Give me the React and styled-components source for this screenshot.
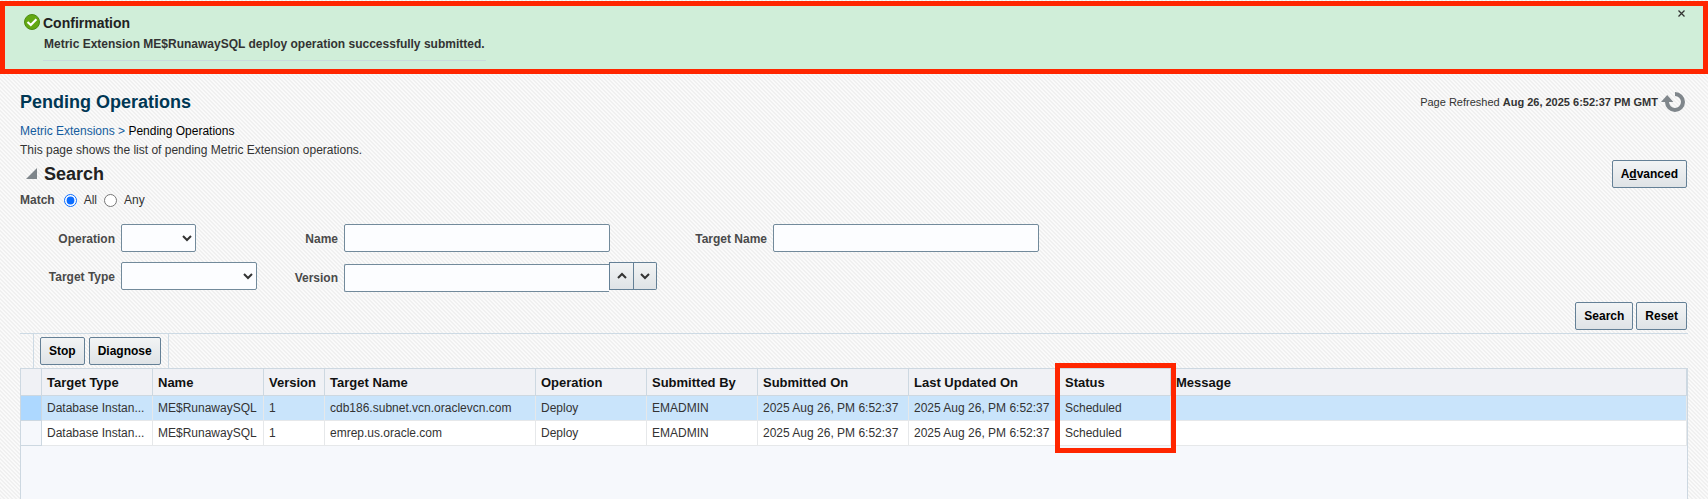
import React from "react";
import styled, { createGlobalStyle } from "styled-components";

const GlobalStyle = createGlobalStyle`
  * { box-sizing: border-box; }
  body {
    margin: 0;
    font-family: "Liberation Sans", Arial, Helvetica, sans-serif;
    font-size: 12px;
    color: #333;
    background-color: #fafafa;
    background-image: linear-gradient(45deg, #f0f0f0 25%, transparent 25%, transparent 50%, #f0f0f0 50%, #f0f0f0 75%, transparent 75%);
    background-size: 4px 4px;
  }
  button, input, select { font-family: inherit; font-size: inherit; }
`;

const Page = styled.div`
  display: flex;
  flex-direction: column;
  min-height: 100vh;
`;

const Banner = styled.section`
  display: flex;
  align-items: flex-start;
  gap: 3px;
  min-height: 73px;
  margin-top: 1px;
  padding: 3px 17px 0 19px;
  background: #d0eed9;
  border: 5px solid #ff2600;
`;

const BannerIcon = styled.svg`
  flex: none;
  margin-top: 5px;
`;

const BannerBody = styled.div`
  padding: 4px 0 5px;
  border-bottom: 1px solid #c8dcdc;
`;

const BannerTitle = styled.h2`
  margin: 0;
  font-size: 14px;
  line-height: 20px;
  color: #222;
`;

const BannerText = styled.p`
  margin: 0;
  padding: 0 1px;
  font-weight: bold;
  line-height: 22px;
`;

const CloseButton = styled.button`
  display: flex;
  margin-left: auto;
  padding: 0;
  border: 0;
  background: none;
  color: #333;
`;

const Content = styled.main`
  display: flex;
  flex: 1;
  flex-direction: column;
  padding: 16px 20px 0;
`;

const SplitRow = styled.div`
  display: flex;
  align-items: center;
  justify-content: space-between;
  padding-right: 1px;
`;

const PageTitle = styled.h1`
  margin: 0;
  font-size: 18px;
  line-height: 24px;
  color: #003754;
`;

const Refreshed = styled.div`
  display: flex;
  align-items: center;
  gap: 3px;
  font-size: 11px;
`;

const RefreshButton = styled.button`
  display: flex;
  padding: 0 2px 0 0;
  border: 0;
  background: none;
`;

const Breadcrumb = styled.nav`
  margin-top: 8px;
  line-height: 19px;
  color: #000;
  a, span { color: #145c9e; }
  a { text-decoration: none; }
`;

const Description = styled.p`
  margin: 0;
  line-height: 19px;
`;

const SectionTitle = styled.h2`
  display: flex;
  align-items: center;
  gap: 7px;
  margin: 0;
  padding-left: 6px;
  font-size: 18px;
  line-height: 24px;
  color: #222;
`;

const Disclosure = styled.button`
  display: flex;
  padding: 0 0 2px;
  border: 0;
  background: none;
`;

const Button = styled.button`
  height: 28px;
  padding: 0 8px;
  border: 1px solid #648096;
  border-radius: 2px;
  background: linear-gradient(#f2f4f5, #dfe3e6);
  color: #000;
  font-weight: bold;
`;

const MatchRow = styled.fieldset`
  display: flex;
  align-items: center;
  height: 20px;
  margin: 5px 0 11px;
  padding: 0;
  border: 0;
`;

const MatchTitle = styled.span`
  margin-right: 9px;
  font-weight: bold;
  color: #4a4a4a;
`;

const RadioLabel = styled.label`
  display: flex;
  align-items: center;
  gap: 7px;
  margin-right: 7px;
`;

const Radio = styled.input`
  width: 13px;
  height: 13px;
  margin: 0;
  accent-color: #0a6cff;
`;

const Fields = styled.div`
  display: flex;
  align-items: flex-start;
`;

const FieldGroup = styled.div`
  display: grid;
  grid-template-columns: ${(p) => p.$label}px auto;
  gap: 10px 6px;
  align-items: center;
`;

const FieldLabel = styled.label`
  padding-top: 2px;
  text-align: right;
  font-weight: bold;
  color: #4a4a4a;
`;

const SelectBox = styled.span`
  display: grid;
  align-items: center;
  width: ${(p) => p.$width}px;
  svg {
    grid-area: 1 / 1;
    justify-self: end;
    margin-right: 4px;
    pointer-events: none;
  }
`;

const SelectInput = styled.select`
  grid-area: 1 / 1;
  width: 100%;
  height: 28px;
  padding: 0 20px 0 4px;
  appearance: none;
  border: 1px solid #728a9b;
  border-radius: 2px;
  background: #fcfdff;
`;

const TextInput = styled.input`
  width: 266px;
  height: 28px;
  padding: 0 4px;
  border: 1px solid #728a9b;
  border-radius: 2px;
  background: #fcfdff;
`;

const SpinField = styled.div`
  display: flex;
  height: 30px;
  ${TextInput} {
    align-self: flex-end;
    width: 265px;
    border-right: 0;
    border-radius: 2px 0 0 2px;
  }
`;

const SpinButton = styled.button`
  display: flex;
  align-items: center;
  justify-content: center;
  width: 25px;
  height: 28px;
  padding: 0;
  border: 1px solid #648096;
  background: linear-gradient(#f2f4f5, #dfe3e6);
  & + & {
    width: 23px;
    border-left: 0;
    border-radius: 0 2px 2px 0;
  }
`;

const Actions = styled.div`
  display: flex;
  justify-content: flex-end;
  gap: 3px;
  padding: 10px 1px 3px;
  border-bottom: 1px solid #cddae4;
`;

const Toolbar = styled.div`
  display: flex;
  align-items: flex-start;
  align-self: flex-start;
  gap: 4px;
  height: 34px;
  margin-left: 13px;
  padding: 3px 7px 0 6px;
  border: solid #cddae4;
  border-width: 0 1px;
`;

const TablePanel = styled.div`
  flex: 1;
  border: 1px solid #cdd8e1;
  border-bottom: 0;
  background: #f6f8fc;
`;

const Table = styled.table`
  width: 100%;
  table-layout: fixed;
  border-spacing: 0;
`;

const HeadCell = styled.th`
  position: relative;
  height: 27px;
  padding: 1px 5px 0;
  border: solid #cdd8e1;
  border-width: 0 1px 1px 0;
  background: #f0f1f5;
  color: #111;
  font-size: 13px;
  text-align: left;
  white-space: nowrap;
`;

const Highlight = styled.span`
  position: absolute;
  z-index: 1;
  top: -6px;
  left: -5px;
  right: -6px;
  height: 90px;
  border: 5px solid #ff2600;
  pointer-events: none;
`;

const Row = styled.tr`
  background: ${(p) => (p.$selected ? "#c9e4fb" : "#fff")};
`;

const Cell = styled.td`
  height: 25px;
  padding: 0 5px;
  border: solid #e6e8ea;
  border-width: 0 1px 1px 0;
  white-space: nowrap;
`;

const Gutter = styled.td`
  padding: 0;
  border: solid #cdd8e1;
  border-width: 0 1px 1px 0;
  background: ${(p) => (p.$selected ? "#add8ff" : "#f6f8fc")};
`;

const Chevron = ({ up }) => (
  <svg width="10" height="8" viewBox="0 0 10 8" fill="none" stroke="#333" strokeWidth="2">
    <path d={up ? "M1 6 L5 2 L9 6" : "M1 2 L5 6 L9 2"} />
  </svg>
);

const Select = ({ id, width }) => (
  <SelectBox $width={width}>
    <SelectInput id={id} />
    <Chevron />
  </SelectBox>
);

const columns = [
  { name: "Target Type", width: 111 },
  { name: "Name", width: 111 },
  { name: "Version", width: 61 },
  { name: "Target Name", width: 211 },
  { name: "Operation", width: 111 },
  { name: "Submitted By", width: 111 },
  { name: "Submitted On", width: 151 },
  { name: "Last Updated On", width: 151 },
  { name: "Status", width: 111, highlighted: true },
  { name: "Message" },
];

const rows = [
  ["Database Instan...", "ME$RunawaySQL", "1", "cdb186.subnet.vcn.oraclevcn.com", "Deploy", "EMADMIN", "2025 Aug 26, PM 6:52:37", "2025 Aug 26, PM 6:52:37", "Scheduled", ""],
  ["Database Instan...", "ME$RunawaySQL", "1", "emrep.us.oracle.com", "Deploy", "EMADMIN", "2025 Aug 26, PM 6:52:37", "2025 Aug 26, PM 6:52:37", "Scheduled", ""],
];

export default function App() {
  return (
    <Page>
      <GlobalStyle />
      <Banner role="status">
        <BannerIcon width="16" height="16" viewBox="0 0 16 16">
          <circle cx="8" cy="8" r="7.5" fill="#62a812" stroke="#4c8c12" />
          <path d="M3.5 8 L6.8 11 L12.4 5.2" fill="none" stroke="#fff" strokeWidth="2.2" />
        </BannerIcon>
        <BannerBody>
          <BannerTitle>Confirmation</BannerTitle>
          <BannerText>Metric Extension ME$RunawaySQL deploy operation successfully submitted.</BannerText>
        </BannerBody>
        <CloseButton aria-label="Close">
          <svg width="9" height="9" viewBox="0 0 9 9" stroke="currentColor" strokeWidth="1.3">
            <path d="M1.5 1.5 L7.5 7.5 M7.5 1.5 L1.5 7.5" />
          </svg>
        </CloseButton>
      </Banner>
      <Content>
        <SplitRow>
          <PageTitle>Pending Operations</PageTitle>
          <Refreshed>
            <span>Page Refreshed <b>Aug 26, 2025 6:52:37 PM GMT</b></span>
            <RefreshButton aria-label="Refresh">
              <svg width="24" height="20" viewBox="0 0 24 20">
                <path d="M14 2 A8 8 0 1 1 6 10" fill="none" stroke="#7f868b" strokeWidth="4" />
                <path d="M0 10 L6.2 3 L12.4 10 Z" fill="#7f868b" />
              </svg>
            </RefreshButton>
          </Refreshed>
        </SplitRow>
        <Breadcrumb aria-label="Breadcrumb">
          <a href="#metric-extensions">Metric Extensions</a> <span>&gt;</span> Pending Operations
        </Breadcrumb>
        <Description>This page shows the list of pending Metric Extension operations.</Description>
        <SplitRow>
          <SectionTitle>
            <Disclosure aria-label="Collapse search">
              <svg width="11" height="11" viewBox="0 0 11 11">
                <path d="M11 0 V11 H0 Z" fill="#7f868b" />
              </svg>
            </Disclosure>
            Search
          </SectionTitle>
          <Button>A<u>d</u>vanced</Button>
        </SplitRow>
        <MatchRow aria-labelledby="match-title">
          <MatchTitle id="match-title">Match</MatchTitle>
          <RadioLabel><Radio type="radio" name="match" defaultChecked />All</RadioLabel>
          <RadioLabel><Radio type="radio" name="match" />Any</RadioLabel>
        </MatchRow>
        <Fields>
          <FieldGroup $label={95}>
            <FieldLabel htmlFor="operation">Operation</FieldLabel>
            <Select id="operation" width={75} />
            <FieldLabel htmlFor="target-type">Target Type</FieldLabel>
            <Select id="target-type" width={136} />
          </FieldGroup>
          <FieldGroup $label={81}>
            <FieldLabel htmlFor="name">Name</FieldLabel>
            <TextInput id="name" />
            <FieldLabel htmlFor="version">Version</FieldLabel>
            <SpinField>
              <TextInput id="version" />
              <SpinButton aria-label="Increase version"><Chevron up /></SpinButton>
              <SpinButton aria-label="Decrease version"><Chevron /></SpinButton>
            </SpinField>
          </FieldGroup>
          <FieldGroup $label={110}>
            <FieldLabel htmlFor="target-name">Target Name</FieldLabel>
            <TextInput id="target-name" />
          </FieldGroup>
        </Fields>
        <Actions>
          <Button>Search</Button>
          <Button>Reset</Button>
        </Actions>
        <Toolbar>
          <Button>Stop</Button>
          <Button>Diagnose</Button>
        </Toolbar>
        <TablePanel>
          <Table>
            <colgroup>
              <col width="21" />
              {columns.map((c) => <col key={c.name} width={c.width} />)}
            </colgroup>
            <thead>
              <tr>
                <HeadCell aria-label="Row" />
                {columns.map((c) => (
                  <HeadCell key={c.name} scope="col">
                    {c.name}
                    {c.highlighted && <Highlight />}
                  </HeadCell>
                ))}
              </tr>
            </thead>
            <tbody>
              {rows.map((cells, r) => (
                <Row key={r} $selected={r === 0}>
                  <Gutter $selected={r === 0} />
                  {cells.map((text, i) => <Cell key={i}>{text}</Cell>)}
                </Row>
              ))}
            </tbody>
          </Table>
        </TablePanel>
      </Content>
    </Page>
  );
}
